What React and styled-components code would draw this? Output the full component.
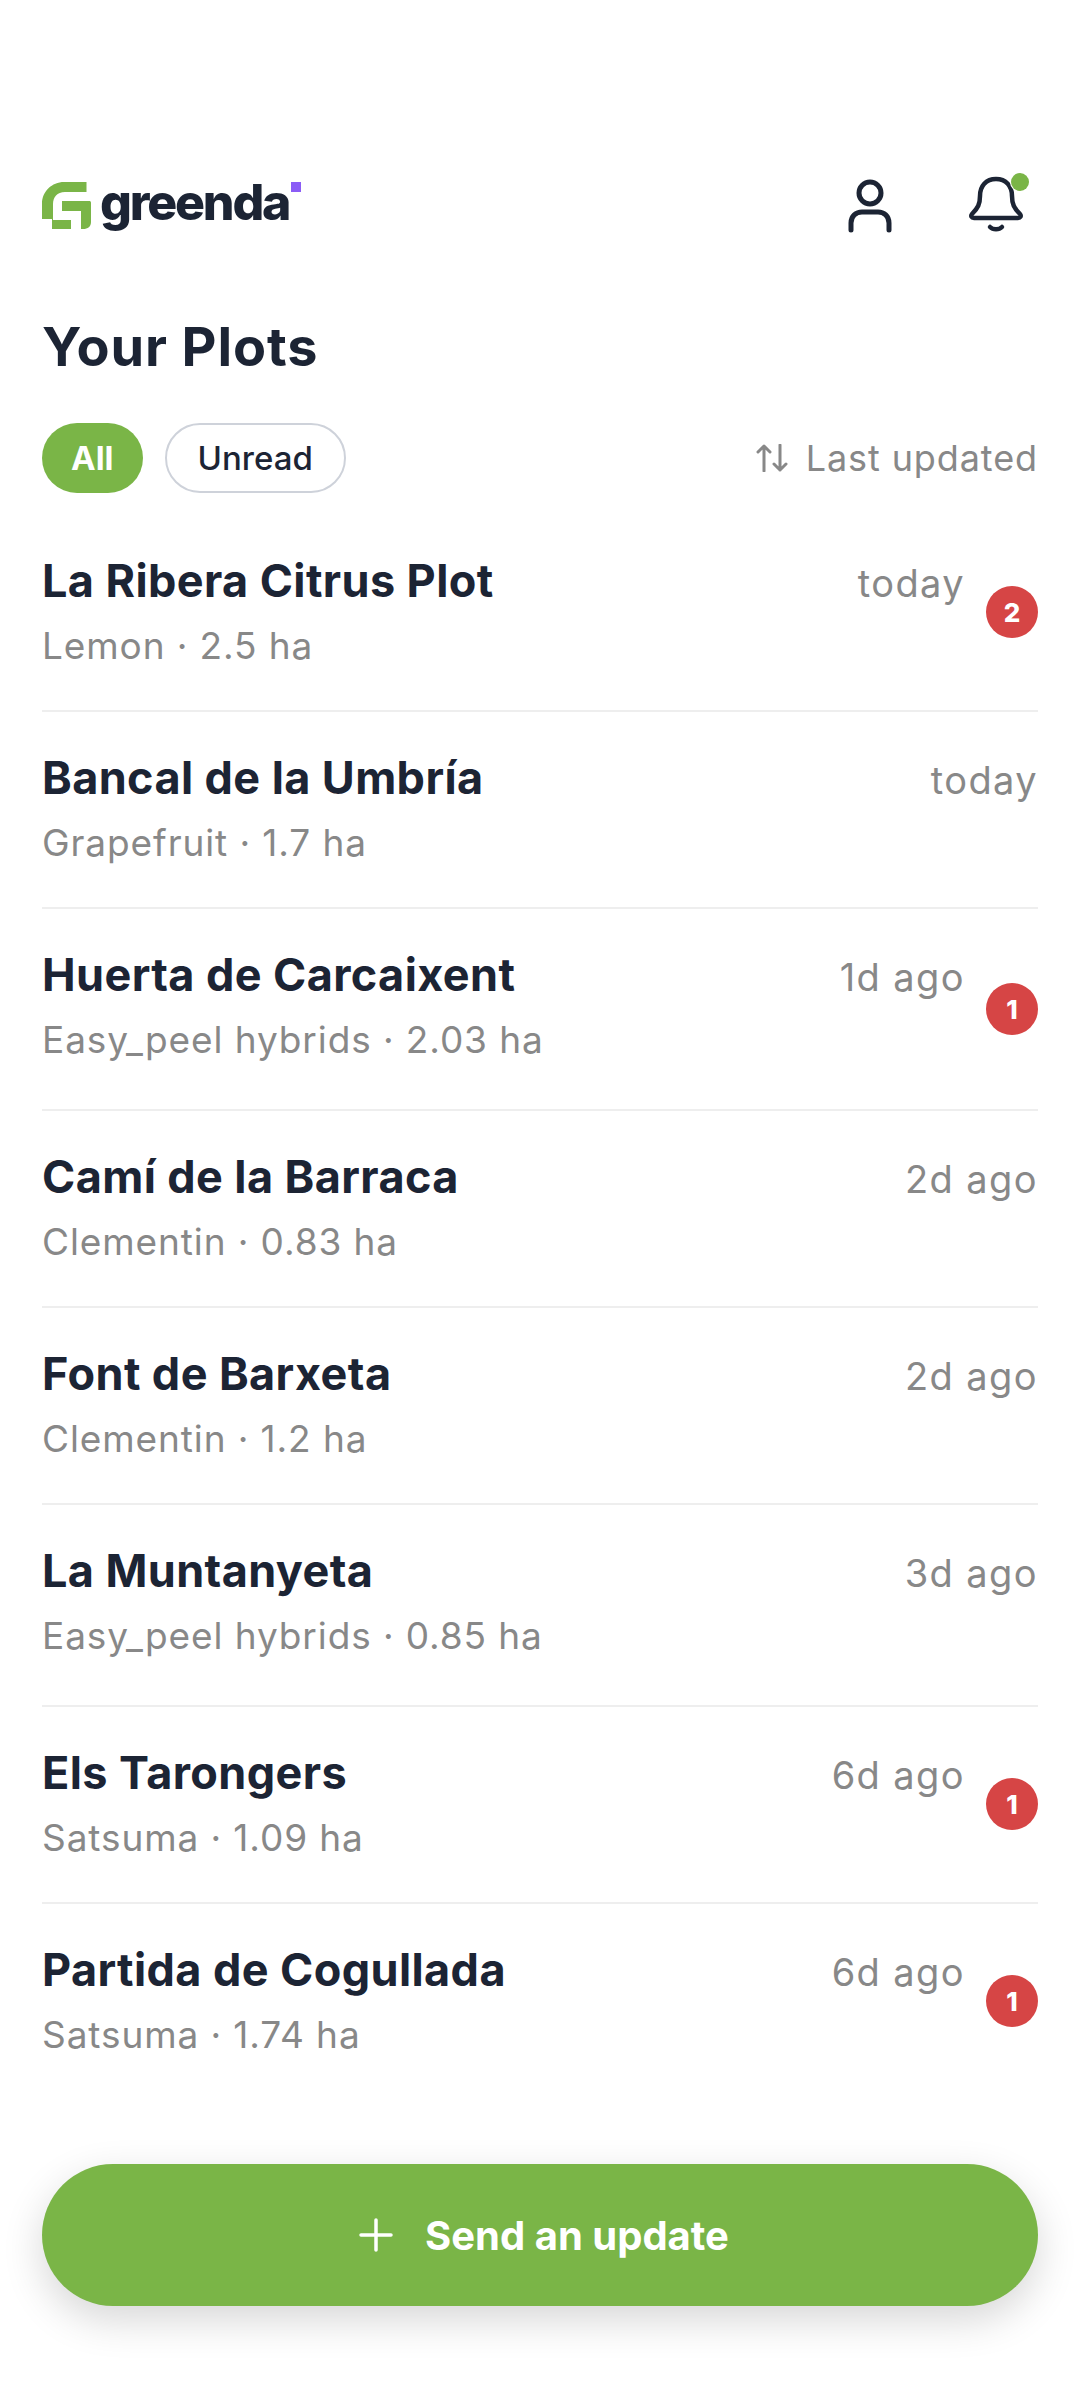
import React from "react";
import styled, { createGlobalStyle } from "styled-components";

const GlobalStyle = createGlobalStyle`
  html, body {
    margin: 0;
    padding: 0;
    background: #fff;
  }
  body {
    font-family: "Inter", "Noto Sans", sans-serif;
  }
`;

const Page = styled.div`
  width: 1080px;
  height: 2400px;
  box-sizing: border-box;
  padding: 164px 42px 0;
  display: flex;
  flex-direction: column;
  overflow: hidden;
`;

const Header = styled.header`
  display: flex;
  align-items: center;
  justify-content: space-between;
  height: 80px;
`;

const Logo = styled.div`
  display: flex;
  align-items: flex-start;
  margin-top: 4px;
`;

const Wordmark = styled.span`
  font-size: 50px;
  font-weight: 800;
  letter-spacing: -2.2px;
  line-height: 56px;
  color: #1c2434;
  margin: -8px 0 0 8px;
`;

const PurpleDot = styled.i`
  display: block;
  width: 10px;
  height: 10px;
  background: #8b5cf6;
  margin-left: 2px;
`;

const HeaderIcons = styled.div`
  display: flex;
  align-items: center;
  gap: 77px;
  margin-right: 15px;
  padding-top: 3px;
`;

const IconWrap = styled.div`
  position: relative;
  display: flex;
`;

const NotifyDot = styled.span`
  position: absolute;
  top: -3px;
  right: -6px;
  width: 18px;
  height: 18px;
  border-radius: 50%;
  background: #7ab547;
  box-shadow: 0 0 0 1px #fff;
`;

const Title = styled.h1`
  margin: 73px 0 0;
  font-size: 54px;
  line-height: 60px;
  font-weight: 700;
  letter-spacing: 0.9px;
  color: #1c2434;
`;

const FilterBar = styled.div`
  display: flex;
  align-items: center;
  margin-top: 46px;
`;

const Chip = styled.button`
  height: 70px;
  box-sizing: border-box;
  padding: 0 ${(p) => (p.$active ? 29 : 31)}px;
  margin-right: 22px;
  border-radius: 35px;
  border: ${(p) => (p.$active ? "none" : "2px solid #ced2da")};
  background: ${(p) => (p.$active ? "#7ab547" : "#fff")};
  color: ${(p) => (p.$active ? "#fff" : "#1c2434")};
  font-family: inherit;
  font-size: 33px;
  font-weight: ${(p) => (p.$active ? 700 : 500)};
`;

const Sort = styled.div`
  margin-left: auto;
  display: flex;
  align-items: center;
  gap: 18px;
  color: #888;
  font-size: 36px;
  letter-spacing: 0.9px;
`;

const List = styled.ul`
  list-style: none;
  margin: 22px 0 0;
  padding: 0;
`;

const Row = styled.li`
  display: flex;
  justify-content: space-between;
  box-sizing: border-box;
  height: ${(p) => (p.$tall ? 202 : 197)}px;
  padding-top: 36px;
  border-bottom: ${(p) => (p.$last ? "none" : "2px solid #eee")};
`;

const PlotInfo = styled.div`
  display: flex;
  flex-direction: column;
`;

const PlotName = styled.div`
  font-size: 45px;
  line-height: 60px;
  font-weight: 700;
  letter-spacing: 0.4px;
  color: #1c2434;
`;

const PlotMeta = styled.div`
  font-size: 37px;
  line-height: 50px;
  letter-spacing: 0.9px;
  margin-top: 10px;
  color: #888;
`;

const Trailing = styled.div`
  display: flex;
  align-items: flex-start;
  gap: 21px;
`;

const Time = styled.span`
  font-size: 38px;
  line-height: 50px;
  letter-spacing: 1.4px;
  margin-top: 7px;
  color: #888;
`;

const Badge = styled.span`
  width: 52px;
  height: 52px;
  margin-top: ${(p) => (p.$tall ? 38 : 35)}px;
  border-radius: 50%;
  background: #d64545;
  color: #fff;
  font-size: 26px;
  font-weight: 800;
  display: flex;
  align-items: center;
  justify-content: center;
`;

const SendButton = styled.button`
  margin-top: 63px;
  height: 142px;
  padding: 0 0 0 8px;
  border: none;
  border-radius: 71px;
  background: #7ab547;
  color: #fff;
  font-family: inherit;
  font-size: 40px;
  font-weight: 700;
  display: flex;
  align-items: center;
  justify-content: center;
  gap: 32px;
  box-shadow: 0 14px 40px rgba(0, 0, 0, 0.16);
`;

const plots = [
  { name: "La Ribera Citrus Plot", meta: "Lemon · 2.5 ha", time: "today", count: 2 },
  { name: "Bancal de la Umbría", meta: "Grapefruit · 1.7 ha", time: "today" },
  { name: "Huerta de Carcaixent", meta: "Easy_peel hybrids · 2.03 ha", time: "1d ago", count: 1, tall: true },
  { name: "Camí de la Barraca", meta: "Clementin · 0.83 ha", time: "2d ago" },
  { name: "Font de Barxeta", meta: "Clementin · 1.2 ha", time: "2d ago" },
  { name: "La Muntanyeta", meta: "Easy_peel hybrids · 0.85 ha", time: "3d ago", tall: true },
  { name: "Els Tarongers", meta: "Satsuma · 1.09 ha", time: "6d ago", count: 1 },
  { name: "Partida de Cogullada", meta: "Satsuma · 1.74 ha", time: "6d ago", count: 1 },
];

const LogoMark = () => (
  <svg width="50" height="48" viewBox="0 0 50 48" fill="#7ab547">
    <path d="M44.5 0H22C10 0 0 9.5 0 21.5V37H10V47H29V38H11V22C11 15 15 10 23 10H44.5Z" />
    <path d="M20 19H47C48.5 19 49 19.5 49 21V40C49 44.5 46 47 41 47H39V29H20Z" />
  </svg>
);

const UserIcon = () => (
  <svg width="44" height="54" viewBox="0 0 44 54" fill="none" stroke="#1c2434" strokeWidth="5" strokeLinecap="round">
    <circle cx="22" cy="14" r="11" />
    <path d="M3 51V44C3 37 8 33 14 33H30C36 33 41 37 41 44V51" />
  </svg>
);

const BellIcon = () => (
  <svg width="54" height="60" viewBox="0 0 54 60" fill="none" stroke="#1c2434" strokeWidth="4.5" strokeLinecap="round" strokeLinejoin="round">
    <path d="M27 3C17 3 11 10 11 20C11 28 9 32 3 38C1.5 40 2.5 42 5 42H49C51.5 42 52.5 40 51 38C45 32 43 28 43 20C43 10 37 3 27 3Z" />
    <path d="M21 51C24 54 30 54 33 51" />
  </svg>
);

const SortIcon = () => (
  <svg width="32" height="28" viewBox="0 0 32 28" fill="none" stroke="#888" strokeWidth="3" strokeLinecap="round" strokeLinejoin="round">
    <path d="M8 27V2M2 8L8 2L14 8" />
    <path d="M24 1V26M18 20L24 26L30 20" />
  </svg>
);

const PlusIcon = () => (
  <svg width="34" height="34" viewBox="0 0 34 34" fill="none" stroke="#fff" strokeWidth="3.5" strokeLinecap="round">
    <path d="M17 2V32M2 17H32" />
  </svg>
);

export default function App() {
  return (
    <Page>
      <GlobalStyle />
      <Header>
        <Logo>
          <LogoMark />
          <Wordmark>greenda</Wordmark>
          <PurpleDot />
        </Logo>
        <HeaderIcons>
          <UserIcon />
          <IconWrap>
            <BellIcon />
            <NotifyDot />
          </IconWrap>
        </HeaderIcons>
      </Header>
      <Title>Your Plots</Title>
      <FilterBar>
        <Chip $active>All</Chip>
        <Chip>Unread</Chip>
        <Sort>
          <SortIcon />
          Last updated
        </Sort>
      </FilterBar>
      <List>
        {plots.map((plot, i) => (
          <Row key={plot.name} $tall={plot.tall} $last={i === plots.length - 1}>
            <PlotInfo>
              <PlotName>{plot.name}</PlotName>
              <PlotMeta>{plot.meta}</PlotMeta>
            </PlotInfo>
            <Trailing>
              <Time>{plot.time}</Time>
              {plot.count && <Badge $tall={plot.tall}>{plot.count}</Badge>}
            </Trailing>
          </Row>
        ))}
      </List>
      <SendButton>
        <PlusIcon />
        Send an update
      </SendButton>
    </Page>
  );
}
